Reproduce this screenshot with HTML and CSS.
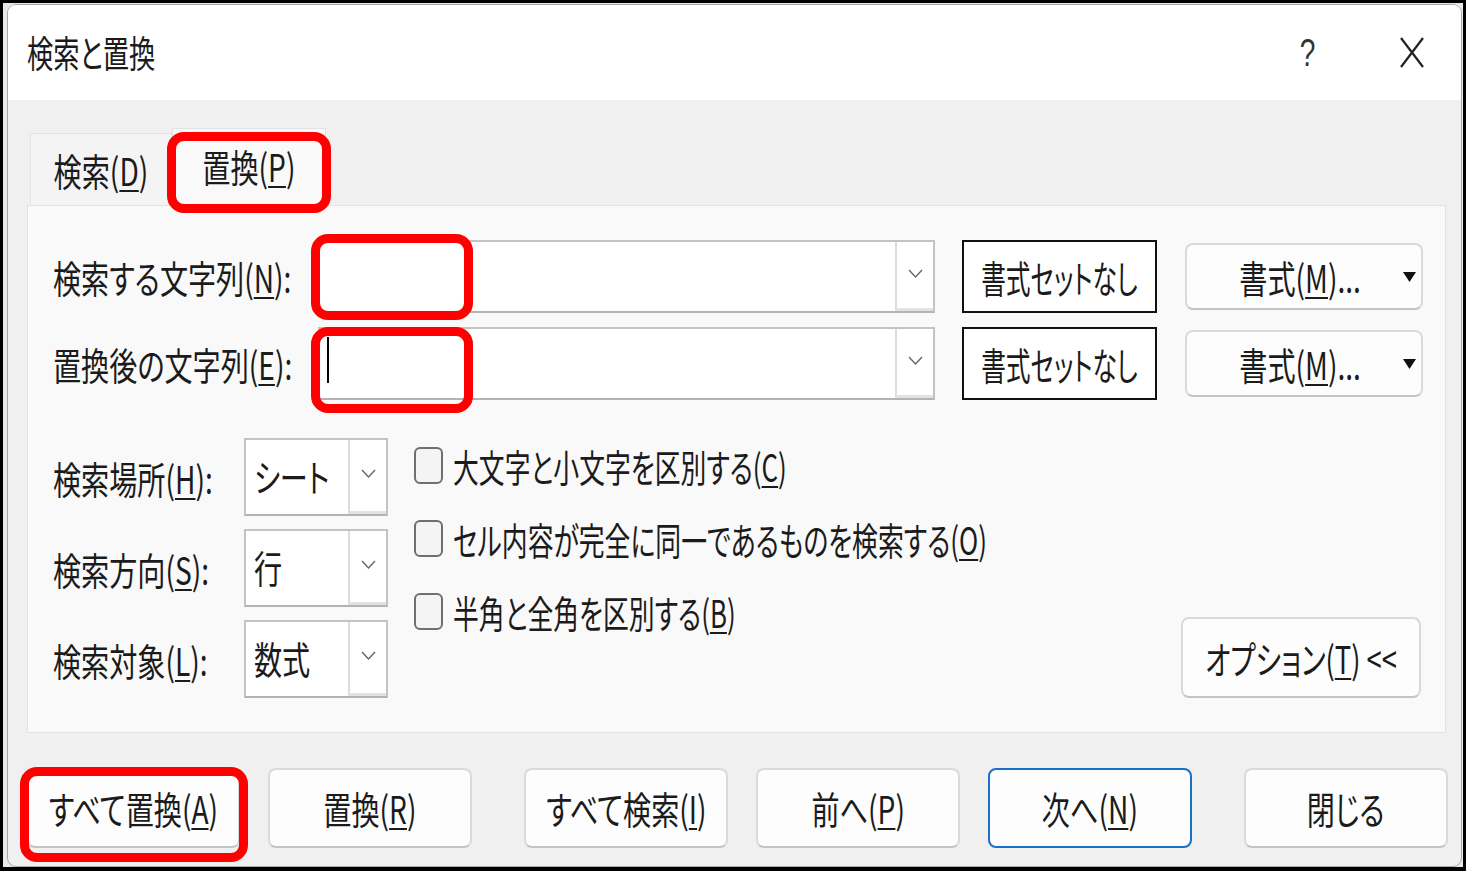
FILE: index.html
```html
<!DOCTYPE html>
<html lang="ja">
  <head>
    <meta charset="UTF-8" />
    <title>検索と置換</title>
    <link rel="stylesheet" href="styles.css">
  </head>
  <body>
    <div class="shot">
      <div class="dialog">
        <div class="titlebar">
          <span class="tx title">検索と置換</span>
          <span class="tx c help">?</span>
          <svg class="close" width="24" height="31" viewBox="0 0 24 31">
            <path d="M1 1 L23 30 M23 1 L1 30" stroke="#222" stroke-width="2.2" fill="none" />
          </svg>
        </div>

        <div class="body">
          <div class="tabs">
            <div class="tab"><span class="tx c">検索(<u>D</u>)</span></div>
            <div class="tab active">
              <span class="tx c">置換(<u>P</u>)</span>
              <span class="mark mark-tab"></span>
            </div>
          </div>

          <div class="panel">
            <div class="row">
              <div class="label label-wide"><span class="tx">検索する文字列(<u>N</u>):</span></div>
              <div class="combo">
                <div class="field"><span class="mark mark-find"></span></div>
                <div class="drop">
                  <svg width="15" height="9" viewBox="0 0 15 9"><polyline points="1,1 7.5,8 14,1" fill="none" stroke="#666" stroke-width="1.4" /></svg>
                </div>
              </div>
              <div class="nofmt"><span class="tx c">書式セットなし</span></div>
              <div class="btn fmt">
                <span class="tx c">書式(<u>M</u>)...</span>
                <svg class="tri" width="13" height="10" viewBox="0 0 13 10"><polygon points="0,0 13,0 6.5,10" fill="#111" /></svg>
              </div>
            </div>

            <div class="row">
              <div class="label label-wide"><span class="tx">置換後の文字列(<u>E</u>):</span></div>
              <div class="combo">
                <div class="field">
                  <span class="caret"></span>
                  <span class="mark mark-repl"></span>
                </div>
                <div class="drop">
                  <svg width="15" height="9" viewBox="0 0 15 9"><polyline points="1,1 7.5,8 14,1" fill="none" stroke="#666" stroke-width="1.4" /></svg>
                </div>
              </div>
              <div class="nofmt"><span class="tx c">書式セットなし</span></div>
              <div class="btn fmt">
                <span class="tx c">書式(<u>M</u>)...</span>
                <svg class="tri" width="13" height="10" viewBox="0 0 13 10"><polygon points="0,0 13,0 6.5,10" fill="#111" /></svg>
              </div>
            </div>

            <div class="options">
              <div class="selects">
                <div class="sel-row">
                  <div class="label"><span class="tx">検索場所(<u>H</u>):</span></div>
                  <div class="select">
                    <div class="sel-value"><span class="tx">シート</span></div>
                    <div class="drop">
                      <svg width="15" height="9" viewBox="0 0 15 9"><polyline points="1,1 7.5,8 14,1" fill="none" stroke="#666" stroke-width="1.4" /></svg>
                    </div>
                  </div>
                </div>
                <div class="sel-row">
                  <div class="label"><span class="tx">検索方向(<u>S</u>):</span></div>
                  <div class="select">
                    <div class="sel-value"><span class="tx">行</span></div>
                    <div class="drop">
                      <svg width="15" height="9" viewBox="0 0 15 9"><polyline points="1,1 7.5,8 14,1" fill="none" stroke="#666" stroke-width="1.4" /></svg>
                    </div>
                  </div>
                </div>
                <div class="sel-row">
                  <div class="label"><span class="tx">検索対象(<u>L</u>):</span></div>
                  <div class="select">
                    <div class="sel-value"><span class="tx">数式</span></div>
                    <div class="drop">
                      <svg width="15" height="9" viewBox="0 0 15 9"><polyline points="1,1 7.5,8 14,1" fill="none" stroke="#666" stroke-width="1.4" /></svg>
                    </div>
                  </div>
                </div>
              </div>

              <div class="checks">
                <div class="check"><span class="box"></span><span class="tx">大文字と小文字を区別する(<u>C</u>)</span></div>
                <div class="check"><span class="box"></span><span class="tx">セル内容が完全に同一であるものを検索する(<u>O</u>)</span></div>
                <div class="check"><span class="box"></span><span class="tx">半角と全角を区別する(<u>B</u>)</span></div>
              </div>

              <div class="btn opt-btn"><span class="tx c">オプション(<u>T</u>) &lt;&lt;</span></div>
            </div>
          </div>

          <div class="actions">
            <div class="btn act first">
              <span class="tx c">すべて置換(<u>A</u>)</span>
              <span class="mark mark-all"></span>
            </div>
            <div class="btn act"><span class="tx c">置換(<u>R</u>)</span></div>
            <div class="btn act push"><span class="tx c">すべて検索(<u>I</u>)</span></div>
            <div class="btn act"><span class="tx c">前へ(<u>P</u>)</span></div>
            <div class="btn act default"><span class="tx c">次へ(<u>N</u>)</span></div>
            <div class="btn act push"><span class="tx c">閉じる</span></div>
          </div>
        </div>
      </div>
    </div>
  </body>
</html>
```

FILE: styles.css
```css
* {
  margin: 0;
  padding: 0;
  box-sizing: border-box;
}

body {
  background-color: #fff;
  color: #1b1b1b;
  font-family: "Noto Sans CJK JP", "Noto Sans", sans-serif;
  font-size: 38px;
  font-feature-settings: "palt";
}

u {
  text-decoration-thickness: 2px;
  text-underline-offset: 4px;
}

/* squeezed text, the screenshot is narrower than it is tall */
.tx {
  display: inline-block;
  line-height: 1;
  white-space: nowrap;
  transform: scaleX(0.74);
  transform-origin: left center;
}

.tx.c {
  transform-origin: center center;
}

.shot {
  width: 1466px;
  height: 871px;
  border: 3px solid #000;
  border-bottom-width: 4px;
  padding: 1px 1px 0 4px;
  background-color: #e9e9e9;
}

.dialog {
  height: 100%;
  display: flex;
  flex-direction: column;
  background-color: #f0f0f0;
  border: 1px solid #a8a8a8;
  border-radius: 9px;
  overflow: hidden;
}

.titlebar {
  height: 95px;
  flex-shrink: 0;
  display: flex;
  align-items: center;
  padding-left: 19px;
  background-color: #fff;
}

.title {
  font-size: 37px;
  transform: scaleX(0.71);
}

.help {
  margin-left: auto;
  font-family: "Liberation Sans", sans-serif;
  font-size: 38px;
  font-weight: 300;
  color: #333;
}

.close {
  margin: 0 37px 0 82px;
}

.body {
  flex: 1;
  padding: 28px 15px 0 19px;
}

.tabs {
  display: flex;
  align-items: flex-end;
  height: 77px;
}

.tab {
  display: flex;
  justify-content: center;
  align-items: center;
  width: 142px;
  height: 72px;
  margin-left: 3px;
  background-color: #f4f4f4;
  border: 1px solid #e4e4e4;
  border-bottom: none;
}

.tab.active {
  position: relative;
  width: 154px;
  height: 78px;
  margin: 0 0 -1px 0;
  background-color: #f9f9f9;
  border-color: #e2e2e2;
  padding-bottom: 4px;
}

.panel {
  height: 528px;
  padding: 34px 24px 0 25px;
  background-color: #f9f9f9;
  border: 1px solid #e3e3e3;
}

.row {
  display: flex;
  align-items: center;
  height: 73px;
}

.row + .row {
  margin-top: 14px;
}

.label {
  width: 191px;
  flex-shrink: 0;
}

.label-wide {
  width: 265px;
}

.combo,
.select {
  display: flex;
  flex-shrink: 0;
  height: 100%;
  background-color: #fff;
  border: 2px solid #c3c3c3;
  border-bottom-color: #b3b3b3;
}

.combo {
  width: 617px;
}

.field {
  position: relative;
  flex: 1;
}

.caret {
  position: absolute;
  left: 7px;
  top: 8px;
  width: 2px;
  height: 46px;
  background-color: #000;
}

.drop {
  width: 38px;
  flex-shrink: 0;
  display: flex;
  justify-content: center;
  align-items: center;
  padding-bottom: 4px;
  border-left: 2px solid #dcdcdc;
  border-bottom: 3px solid #e2e2e2;
}

.nofmt {
  width: 195px;
  height: 100%;
  flex-shrink: 0;
  margin-left: 27px;
  display: flex;
  justify-content: center;
  align-items: center;
  background-color: #fff;
  border: 2px solid #111;
}

.nofmt .tx {
  transform: scaleX(0.65);
}

.btn {
  display: flex;
  justify-content: center;
  align-items: center;
  flex-shrink: 0;
  background-color: #fdfdfd;
  border: 2px solid #dadada;
  border-bottom-color: #c4c4c4;
  border-radius: 8px;
}

.fmt {
  position: relative;
  width: 238px;
  height: 67px;
  margin-left: 28px;
  padding-right: 8px;
}

.tri {
  position: absolute;
  right: 5px;
  top: 27px;
}

.options {
  display: flex;
  margin-top: 38px;
}

.selects {
  display: flex;
  flex-direction: column;
  gap: 13px;
}

.sel-row {
  display: flex;
  align-items: center;
  height: 78px;
}

.select {
  width: 144px;
}

.sel-value {
  flex: 1;
  min-width: 0;
  display: flex;
  align-items: center;
  padding: 0 0 2px 8px;
}

.checks {
  flex: 1;
  min-width: 0;
  display: flex;
  flex-direction: column;
  gap: 36px;
  padding-top: 9px;
  margin-left: 26px;
}

.check {
  display: flex;
  align-items: center;
  gap: 10px;
  height: 37px;
}

.check .tx {
  transform: scaleX(0.68);
}

.box {
  width: 29px;
  height: 37px;
  flex-shrink: 0;
  background-color: #f4f4f4;
  border: 2px solid #6f6f6f;
  border-radius: 6px;
}

.opt-btn {
  width: 240px;
  height: 81px;
  align-self: flex-end;
}

.opt-btn .tx {
  transform: scaleX(0.72);
}

.actions {
  display: flex;
  gap: 28px;
  margin-top: 35px;
}

.act {
  width: 204px;
  height: 80px;
}

.act.first {
  position: relative;
  width: 213px;
}

.act.push {
  margin-left: 24px;
}

.act.default {
  border: 2px solid #1c6fc6;
}

/* red annotation frames */
.mark {
  position: absolute;
  border: 9px solid #ff0000;
  border-radius: 17px;
  pointer-events: none;
}

.mark-tab {
  left: -6px;
  top: 3px;
  width: 164px;
  height: 81px;
}

.mark-find {
  left: -9px;
  top: -8px;
  width: 162px;
  height: 86px;
}

.mark-repl {
  left: -9px;
  top: -2px;
  width: 162px;
  height: 86px;
}

.mark-all {
  left: -9px;
  top: -3px;
  width: 228px;
  height: 95px;
}
```
